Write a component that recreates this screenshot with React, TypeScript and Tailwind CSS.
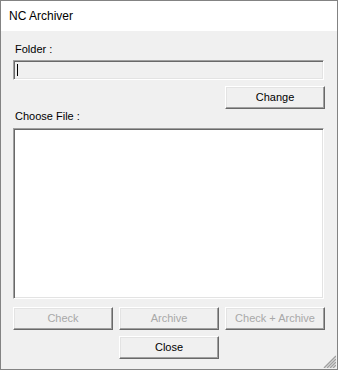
import React from 'react';

const raised =
  'border border-t-white border-l-white border-r-[#696969] border-b-[#696969] shadow-[inset_-1px_-1px_0_#a0a0a0,inset_1px_1px_0_#e3e3e3]';
const sunken =
  'border border-t-[#a0a0a0] border-l-[#a0a0a0] border-r-white border-b-white shadow-[inset_1px_1px_0_#696969,inset_-1px_-1px_0_#e3e3e3]';

const WinButton: React.FC<{ label: string; disabled?: boolean }> = ({ label, disabled }) => (
  <div
    className={`flex h-[23px] w-[100px] items-center justify-center bg-[#f0f0f0] text-[11px] leading-[13px] ${raised} ${
      disabled ? 'text-[#a8a8a8]' : 'text-black'
    }`}
  >
    {label}
  </div>
);

// resize grip, bottom-right corner of the dialog
const SizeGrip: React.FC = () => (
  <svg width="14" height="14" viewBox="0 0 14 14" className="absolute bottom-[1px] right-[1px]">
    {[3, 6, 9, 12].map((o) => (
      <line key={o} x1={14 - o} y1={14} x2={14} y2={14 - o} stroke="#a0a0a0" strokeWidth="1.4" />
    ))}
  </svg>
);

export default function App() {
  return (
    <div className="relative flex h-[370px] w-[338px] flex-col border border-[#838383] bg-[#f0f0f0] font-['Liberation_Sans',Arial,sans-serif] text-black">
      <div className="flex h-[30px] items-center bg-white pl-[8px] text-[12px]">NC Archiver</div>

      <div className="flex flex-col pl-[12px]">
        <div className="mt-[12px] h-[13px] pl-[2px] text-[11px] leading-[13px]">Folder :</div>
        <div className={`mt-[4px] flex h-[20px] w-[311px] items-center bg-[#f0f0f0] pl-[3px] ${sunken}`}>
          <div className="h-[12px] w-[1px] bg-black" />
        </div>

        <div className="mt-[6px] flex w-[312px] justify-end">
          <WinButton label="Change" />
        </div>

        <div className="mt-[1px] h-[13px] pl-[2px] text-[11px] leading-[13px]">Choose File :</div>
        <div className={`mt-[5px] h-[171px] w-[311px] bg-white ${sunken}`} />

        <div className="mt-[8px] flex gap-[6px]">
          <WinButton label="Check" disabled />
          <WinButton label="Archive" disabled />
          <WinButton label="Check + Archive" disabled />
        </div>

        <div className="mt-[6px] flex pl-[106px]">
          <WinButton label="Close" />
        </div>
      </div>

      <SizeGrip />
    </div>
  );
}
